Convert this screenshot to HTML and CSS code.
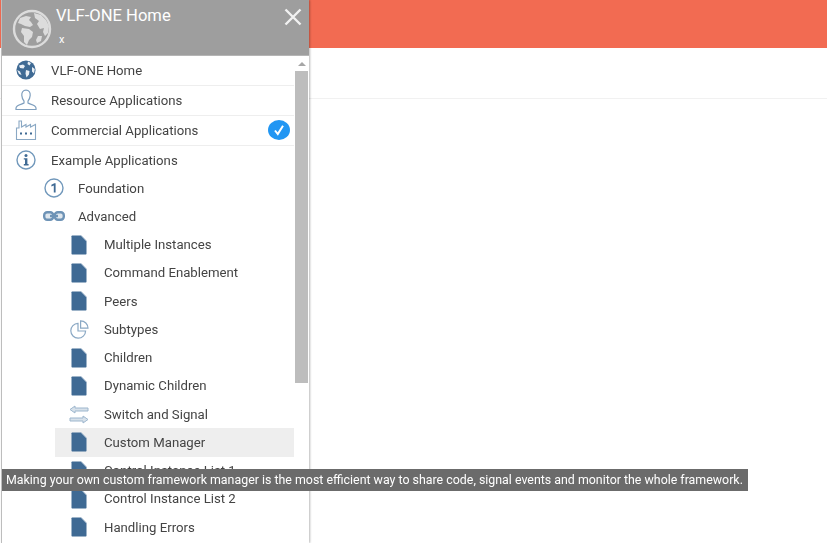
FILE: index.html
```html
<!DOCTYPE html>
<html lang="en">
<head>
<meta charset="utf-8">
<title>VLF-ONE Home</title>
<link rel="stylesheet" href="styles.css">
</head>
<body>
<svg class="defs" width="0" height="0" aria-hidden="true">
  <symbol id="doc" viewBox="0 0 16 20">
    <path fill="#3f6a94" d="M0.5 1.2Q0.5 0.5 1.2 0.5H10.2L15.5 6V18.8Q15.5 19.5 14.8 19.5H1.2Q0.5 19.5 0.5 18.8Z"/>
    <path fill="#b9c9d9" d="M10.6 0.5L15.5 5.6V6.4L10.6 1.6Z"/>
  </symbol>
</svg>
<div class="page">
  <div class="topbar"></div>
  <div class="subbar"></div>
</div>
<aside class="drawer">
  <header class="drawer-head">
    <svg class="head-globe" viewBox="0 0 40 40" width="40" height="40">
      <circle cx="20" cy="20" r="18" fill="none" stroke="#dcdcdc" stroke-width="2.4"/>
      <path fill="#dcdcdc" d="M8 9L14 7L19 8L17 11L19 13L21 16L18 18L13 17L9 15L6 14Z"/>
      <path fill="#dcdcdc" d="M22 4L29 6L34 11L37 17L36 24L33 27L31 23L32 19L28 20L25 15L27 12L23 9Z"/>
      <path fill="#dcdcdc" d="M10 19L17 20L21 23L20 28L17 31L15 36L12 33L12 27L9 23Z"/>
      <path fill="#dcdcdc" d="M26 27L30 27L29 32L25 34L24 31Z"/>
    </svg>
    <div class="head-text">
      <div class="head-title">VLF-ONE Home</div>
      <div class="head-sub">x</div>
    </div>
    <svg class="head-close" viewBox="0 0 18 18" width="18" height="18">
      <path d="M1.5 1.5L16.5 16.5M16.5 1.5L1.5 16.5" stroke="#f1f1f1" stroke-width="2.4" fill="none"/>
    </svg>
  </header>
  <div class="drawer-body">
    <ul class="menu">
      <li class="row top">
        <span class="ico"><svg viewBox="0 0 20 20" width="20" height="20">
          <circle cx="10" cy="10" r="9.6" fill="#3f6a94"/>
          <path fill="#e9eff5" d="M3 5.5L7 4.5L9 6L7.5 8.5L4 8ZM12 1.5L15 3L13.5 5.5L11.5 4ZM16 7L18.8 9L18 13.5L16 11.5ZM10 10L13.5 11L13 14.5L10.5 17.5L9.5 13.5ZM1.2 10L4 11.5L5.5 15L3 14Z"/>
        </svg></span>
        <span class="label">VLF-ONE Home</span>
      </li>
      <li class="row top">
        <span class="ico"><svg viewBox="0 0 22 22" width="22" height="22" fill="none" stroke="#7f9fbe" stroke-width="1.2">
          <path d="M11 1.2C7.8 1.2 6.6 3.6 6.8 6.4C7 9.4 8.4 11.4 9 12.2V14C8 15.2 1.2 15.6 1 19V20.5H21V19C20.8 15.6 14 15.2 13 14V12.2C13.6 11.4 15 9.4 15.2 6.4C15.4 3.6 14.2 1.2 11 1.2Z"/>
        </svg></span>
        <span class="label">Resource Applications</span>
      </li>
      <li class="row top">
        <span class="ico"><svg viewBox="0 0 22 22" width="22" height="22" fill="none" stroke="#8aa8c4" stroke-width="1.1">
          <path d="M1.5 20.5V9H4V2H6.5V8L11 5.5V8L15.5 5.5V8L20.5 5.5V20.5Z"/>
          <path d="M5 14.5H7M10 14.5H12M15 14.5H17" stroke="#3f6a94" stroke-width="2"/>
        </svg></span>
        <span class="label">Commercial Applications</span>
        <span class="badge"><svg viewBox="0 0 12 12" width="12" height="12">
          <path d="M2 6.5L4.8 10L10 1.8" fill="none" stroke="#fff" stroke-width="2"/>
        </svg></span>
      </li>
      <li class="row top plain">
        <span class="ico"><svg viewBox="0 0 20 20" width="20" height="20">
          <circle cx="10" cy="10" r="9" fill="none" stroke="#7198bb" stroke-width="1.4"/>
          <circle cx="10" cy="5.6" r="1.5" fill="#3f6a94"/>
          <path fill="#3f6a94" d="M7.8 8.2H11.4V14H12.6V15.4H7.8V14H9V9.6H7.8Z"/>
        </svg></span>
        <span class="label">Example Applications</span>
      </li>
      <li class="row lvl1">
        <span class="ico"><svg viewBox="0 0 20 20" width="20" height="20">
          <circle cx="10" cy="10" r="9" fill="none" stroke="#7198bb" stroke-width="1.4"/>
          <path fill="#3f6a94" d="M7.4 6.8L10.4 5.2H11.6V14.6H9.8V7.6L7.4 8.6Z"/>
        </svg></span>
        <span class="label">Foundation</span>
      </li>
      <li class="row lvl1">
        <span class="ico"><svg viewBox="0 0 22 10" width="22" height="10" fill="#dfe7ee" stroke="#6e93b6" stroke-width="2.4">
          <rect x="1.2" y="1.2" width="9" height="7.6" rx="3"/>
          <rect x="11.8" y="1.2" width="9" height="7.6" rx="3"/>
          <path d="M7 5H15"/>
        </svg></span>
        <span class="label">Advanced</span>
      </li>
      <li class="row lvl2"><span class="ico"><svg width="16" height="20"><use href="#doc"/></svg></span><span class="label">Multiple Instances</span></li>
      <li class="row lvl2"><span class="ico"><svg width="16" height="20"><use href="#doc"/></svg></span><span class="label">Command Enablement</span></li>
      <li class="row lvl2"><span class="ico"><svg width="16" height="20"><use href="#doc"/></svg></span><span class="label">Peers</span></li>
      <li class="row lvl2">
        <span class="ico"><svg viewBox="0 0 19 19" width="19" height="19" fill="none" stroke="#8aa8c4" stroke-width="1.2">
          <path d="M8 3.4A7.4 7.4 0 1 0 15.6 11H8Z"/>
          <path d="M10.6 0.8A7.4 7.4 0 0 1 18 8.2H10.6Z"/>
        </svg></span>
        <span class="label">Subtypes</span>
      </li>
      <li class="row lvl2"><span class="ico"><svg width="16" height="20"><use href="#doc"/></svg></span><span class="label">Children</span></li>
      <li class="row lvl2"><span class="ico"><svg width="16" height="20"><use href="#doc"/></svg></span><span class="label">Dynamic Children</span></li>
      <li class="row lvl2">
        <span class="ico"><svg viewBox="0 0 20 19" width="20" height="19" fill="#d7e1ea" stroke="#9db6cd" stroke-width="1">
          <path d="M6 1L1 4.5L6 8V6H19V3H6Z"/>
          <path d="M14 11L19 14.5L14 18V16H1V13H14Z"/>
        </svg></span>
        <span class="label">Switch and Signal</span>
      </li>
      <li class="row lvl2 active"><span class="ico"><svg width="16" height="20"><use href="#doc"/></svg></span><span class="label">Custom Manager</span></li>
      <li class="row lvl2"><span class="ico"><svg width="16" height="20"><use href="#doc"/></svg></span><span class="label">Control Instance List 1</span></li>
      <li class="row lvl2"><span class="ico"><svg width="16" height="20"><use href="#doc"/></svg></span><span class="label">Control Instance List 2</span></li>
      <li class="row lvl2"><span class="ico"><svg width="16" height="20"><use href="#doc"/></svg></span><span class="label">Handling Errors</span></li>
    </ul>
    <div class="scroll">
      <div class="arrow"></div>
      <div class="thumb"></div>
    </div>
  </div>
</aside>
<div class="tooltip">Making your own custom framework manager is the most efficient way to share code, signal events and monitor the whole framework.</div>
</body>
</html>
```
FILE: styles.css
```css
* { box-sizing: border-box; }
html, body { margin: 0; height: 100%; overflow: hidden; background: #fff; }
body { font-family: Roboto, "Liberation Sans", sans-serif; color: #444; }
.defs { position: absolute; }
.topbar { height: 48px; background: #f26b52; }
.subbar { height: 51px; border-bottom: 1px solid #f1f1f1; }
.drawer {
  position: absolute; left: 1px; top: 0; bottom: 0; width: 308px;
  background: #fff; border-left: 1px solid #bdbdbd;
  box-shadow: 1px 0 2px rgba(0,0,0,.28);
  display: flex; flex-direction: column; overflow: hidden;
  filter: blur(.35px);
}
.drawer-head {
  flex: none; height: 56px; background: #9e9e9e; color: #fff;
  display: flex; align-items: flex-start;
  border-bottom: 1px solid #b5b5b5;
}
.head-globe { flex: none; margin: 9px 0 0 10px; }
.head-text { flex: 1; margin-left: 4px; }
.head-title { font-size: 16.6px; line-height: 22px; margin-top: 5px; }
.head-sub { font-size: 11px; line-height: 14px; margin: 6px 0 0 3px; }
.head-close { flex: none; margin: 8px 7px 0 0; }
.drawer-body { flex: 1; display: flex; min-height: 0; }
.menu { flex: none; width: 292px; margin: 0; padding: 0; list-style: none; }
.row { display: flex; align-items: center; font-size: 13.2px; }
.top { height: 30px; border-bottom: 1px solid #eee; padding-left: 11px; padding-bottom: 1px; }
.top.plain { border-bottom: 0; height: 28px; padding-bottom: 0; }
.lvl1 { height: 28.25px; padding-left: 39px; }
.lvl2 { height: 28.25px; margin-left: 53px; padding-left: 11px; }
.ico { flex: none; width: 26px; display: flex; justify-content: center; align-items: center; }
.top .label { margin-left: 12px; }
.lvl1 .label { margin-left: 11px; }
.lvl2 .label { margin-left: 12px; }
.active { background: #eee; }
.badge {
  margin-left: auto; margin-right: 4px; width: 22px; height: 20px; border-radius: 50%;
  background: #2196f3; display: flex; align-items: center; justify-content: center;
}
.scroll { flex: none; width: 13px; margin-left: 1px; position: relative; }
.arrow {
  width: 0; margin: 6px auto 0;
  border-left: 4px solid transparent; border-right: 4px solid transparent;
  border-bottom: 4px solid #a6a6a6;
}
.thumb { height: 312px; margin: 5px 0 0; background: #bdbdbd; }
.tooltip {
  position: absolute; left: 2px; top: 469px; width: 746px; height: 22px;
  padding-left: 4px; background: #6b6b6b; color: #fff;
  font-size: 12.4px; line-height: 22px; white-space: nowrap;
  filter: blur(.3px);
}
```
